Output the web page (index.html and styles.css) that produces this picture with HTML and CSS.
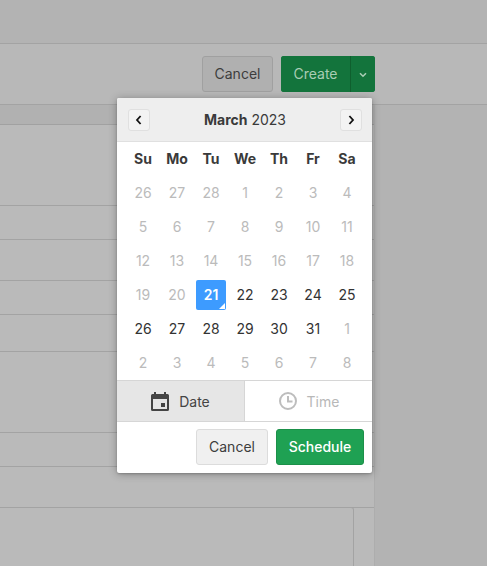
FILE: index.html
```
<!DOCTYPE html>
<html lang="en">
<head>
<meta charset="utf-8">
<title>Schedule</title>
<link rel="stylesheet" href="styles.css">
</head>
<body>
<div class="app">
  <header class="topbar"></header>
  <div class="toolbar">
    <button class="btn btn-dim-cancel">Cancel</button>
    <div class="split">
      <button class="split-main">Create</button>
      <button class="split-caret" aria-label="More">
        <svg width="10" height="6" viewBox="0 0 10 6"><path d="M2 1.2 5 4.2 8 1.2" fill="none" stroke="#a9cdb4" stroke-width="1.6"/></svg>
      </button>
    </div>
  </div>
  <div class="body">
    <main class="content">
      <div class="thead"></div>
      <div class="row r81"></div>
      <div class="row r34"></div>
      <div class="row r41"></div>
      <div class="row r34"></div>
      <div class="row r37"></div>
      <div class="row r81"></div>
      <div class="row r34"></div>
      <div class="row r41"></div>
      <div class="box"></div>
    </main>
    <aside class="side"></aside>
  </div>
</div>

<div class="cal">
  <div class="cal-head">
    <button class="nav" aria-label="Previous"><svg width="8" height="12" viewBox="0 0 8 12"><path d="M5.6 2 2 6l3.6 4" fill="none" stroke="#111" stroke-width="1.8"/></svg></button>
    <div class="title"><b>March</b> 2023</div>
    <button class="nav" aria-label="Next"><svg width="8" height="12" viewBox="0 0 8 12"><path d="M2.4 2 6 6l-3.6 4" fill="none" stroke="#111" stroke-width="1.8"/></svg></button>
  </div>
  <div class="grid">
    <div class="wd">Su</div><div class="wd">Mo</div><div class="wd">Tu</div><div class="wd">We</div><div class="wd">Th</div><div class="wd">Fr</div><div class="wd">Sa</div>
    <div class="d off">26</div><div class="d off">27</div><div class="d off">28</div><div class="d off">1</div><div class="d off">2</div><div class="d off">3</div><div class="d off">4</div>
    <div class="d off">5</div><div class="d off">6</div><div class="d off">7</div><div class="d off">8</div><div class="d off">9</div><div class="d off">10</div><div class="d off">11</div>
    <div class="d off">12</div><div class="d off">13</div><div class="d off">14</div><div class="d off">15</div><div class="d off">16</div><div class="d off">17</div><div class="d off">18</div>
    <div class="d off">19</div><div class="d off">20</div><div class="d sel">21</div><div class="d">22</div><div class="d">23</div><div class="d">24</div><div class="d">25</div>
    <div class="d">26</div><div class="d">27</div><div class="d">28</div><div class="d">29</div><div class="d">30</div><div class="d">31</div><div class="d off">1</div>
    <div class="d off">2</div><div class="d off">3</div><div class="d off">4</div><div class="d off">5</div><div class="d off">6</div><div class="d off">7</div><div class="d off">8</div>
  </div>
  <div class="tabs">
    <div class="tab active">
      <svg width="20" height="20" viewBox="0 0 20 20"><path fill="#444" fill-rule="evenodd" d="M4 1h2v2h8V1h2v2h1.500A1.500 1.500 0 0 1 19 4.500V18.500A1.500 1.500 0 0 1 17.500 20H2.500A1.500 1.500 0 0 1 1 18.500V4.500A1.500 1.500 0 0 1 2.500 3H4zM3 8v10h14V8zM11 12h4v4h-4z"/></svg>
      <span>Date</span>
    </div>
    <div class="tab">
      <svg width="20" height="20" viewBox="0 0 20 20"><circle cx="10" cy="10" r="8" fill="none" stroke="#bdbdbd" stroke-width="2"/><path d="M10 5v5.500h4.500" fill="none" stroke="#bdbdbd" stroke-width="2"/></svg>
      <span>Time</span>
    </div>
  </div>
  <div class="cal-foot">
    <button class="btn btn-cancel">Cancel</button>
    <button class="btn btn-schedule">Schedule</button>
  </div>
</div>
</body>
</html>
```
FILE: styles.css
```
* { box-sizing: border-box; }
html, body { margin: 0; height: 100%; overflow: hidden; }
body {
  background: #b4b4b4;
  font-family: Inter, "Liberation Sans", sans-serif;
  font-size: 14px;
  color: #333;
}
button { font: inherit; cursor: pointer; }

.app { display: flex; flex-direction: column; height: 566px; }
.topbar { height: 44px; background: #b3b3b3; border-bottom: 1px solid #a3a3a3; }
.toolbar {
  height: 61px;
  background: #b8b8b8;
  border-bottom: 1px solid #a3a3a3;
  display: flex;
  align-items: flex-start;
  padding: 12px 112px 0 0;
  justify-content: flex-end;
  gap: 8px;
}
.body { flex: 1; display: flex; min-height: 0; }
.content { width: 375px; border-right: 1px solid #adadad; background: #bababa; }
.side { flex: 1; background: #b3b3b3; }

.thead { height: 20px; background: #b1b1b1; border-bottom: 1px solid #a1a1a1; }
.row { border-bottom: 1px solid #a3a3a3; }
.r81 { height: 81px; }
.r34 { height: 34px; }
.r41 { height: 41px; }
.r37 { height: 37px; }
.box {
  width: 354px;
  height: 70px;
  margin-top: -1px;
  border: 1px solid #a3a3a3;
  border-left: 0;
  border-radius: 0 3px 0 0;
}

.btn {
  height: 36px;
  border-radius: 3px;
  padding: 0;
  font-size: 14px;
  line-height: 34px;
}
.btn-dim-cancel {
  width: 71px;
  background: #b0b0b0;
  border: 1px solid #a0a0a0;
  color: #3d3d3d;
}
.split { display: flex; height: 36px; border-radius: 3px; overflow: hidden; background: #13743c; }
.split-main {
  width: 70px;
  background: #13743c;
  border: 0;
  border-right: 1px solid #0f5f2e;
  color: #a9cdb4;
  padding: 0 0 1px;
}
.split-caret {
  width: 24px;
  background: #13743c;
  border: 0;
  padding: 2px 0 0;
  display: flex;
  align-items: center;
  justify-content: center;
}

.cal {
  position: absolute;
  left: 117px;
  top: 98px;
  width: 255px;
  height: 375px;
  background: #fff;
  border-radius: 2px;
  box-shadow: 0 1px 9px rgba(0, 0, 0, .3), 0 1px 2px rgba(0, 0, 0, .18);
  display: flex;
  flex-direction: column;
}
.cal-head {
  height: 44px;
  background: #eeeeee;
  border-bottom: 1px solid #e0e0e0;
  border-radius: 2px 2px 0 0;
  display: flex;
  align-items: center;
  justify-content: space-between;
  padding: 0 10px 0 11px;
}
.nav {
  width: 22px;
  height: 22px;
  padding: 0;
  background: #f3f3f3;
  border: 1px solid #e0e0e0;
  border-radius: 3px;
  display: flex;
  align-items: center;
  justify-content: center;
}
.title { font-size: 14px; color: #3a3a3a; }
.title b { font-weight: 700; }

.grid {
  display: grid;
  grid-template-columns: repeat(7, 34px);
  grid-auto-rows: 34px;
  padding-left: 9px;
  height: 238px;
}
.wd, .d { display: flex; align-items: center; justify-content: center; padding-bottom: 1px; }
.wd { font-weight: 700; color: #3a3a3a; font-size: 14px; }
.d { color: #333; font-size: 14px; }
.d.off { color: #bbbbbb; }
.d.sel {
  position: relative;
  margin: 2px;
  background: #3d9bff;
  color: #fff;
  font-weight: 600;
  border-radius: 2px;
}
.d.sel::after {
  content: "";
  position: absolute;
  right: 1px;
  bottom: 1px;
  border-left: 6px solid transparent;
  border-bottom: 6px solid #fff;
}

.tabs {
  height: 42px;
  display: flex;
  border-top: 1px solid #d6d6d6;
  border-bottom: 1px solid #d6d6d6;
}
.tab {
  flex: 1;
  display: flex;
  align-items: center;
  justify-content: center;
  gap: 9px;
  color: #b8b8b8;
  font-size: 14px;
}
.tab.active {
  flex: 0 0 128px;
  background: #e6e6e6;
  color: #444;
  border-right: 1px solid #d6d6d6;
  padding-right: 1px;
}
.cal-foot {
  flex: 1;
  display: flex;
  justify-content: flex-end;
  align-items: flex-start;
  gap: 8px;
  padding: 7px 8px 0 0;
}
.btn-cancel {
  width: 72px;
  background: #f0f0f0;
  border: 1px solid #dcdcdc;
  color: #3d3d3d;
}
.btn-schedule {
  width: 88px;
  background: #1fa153;
  border: 1px solid #1c9049;
  color: #fff;
  font-weight: 500;
}
```
